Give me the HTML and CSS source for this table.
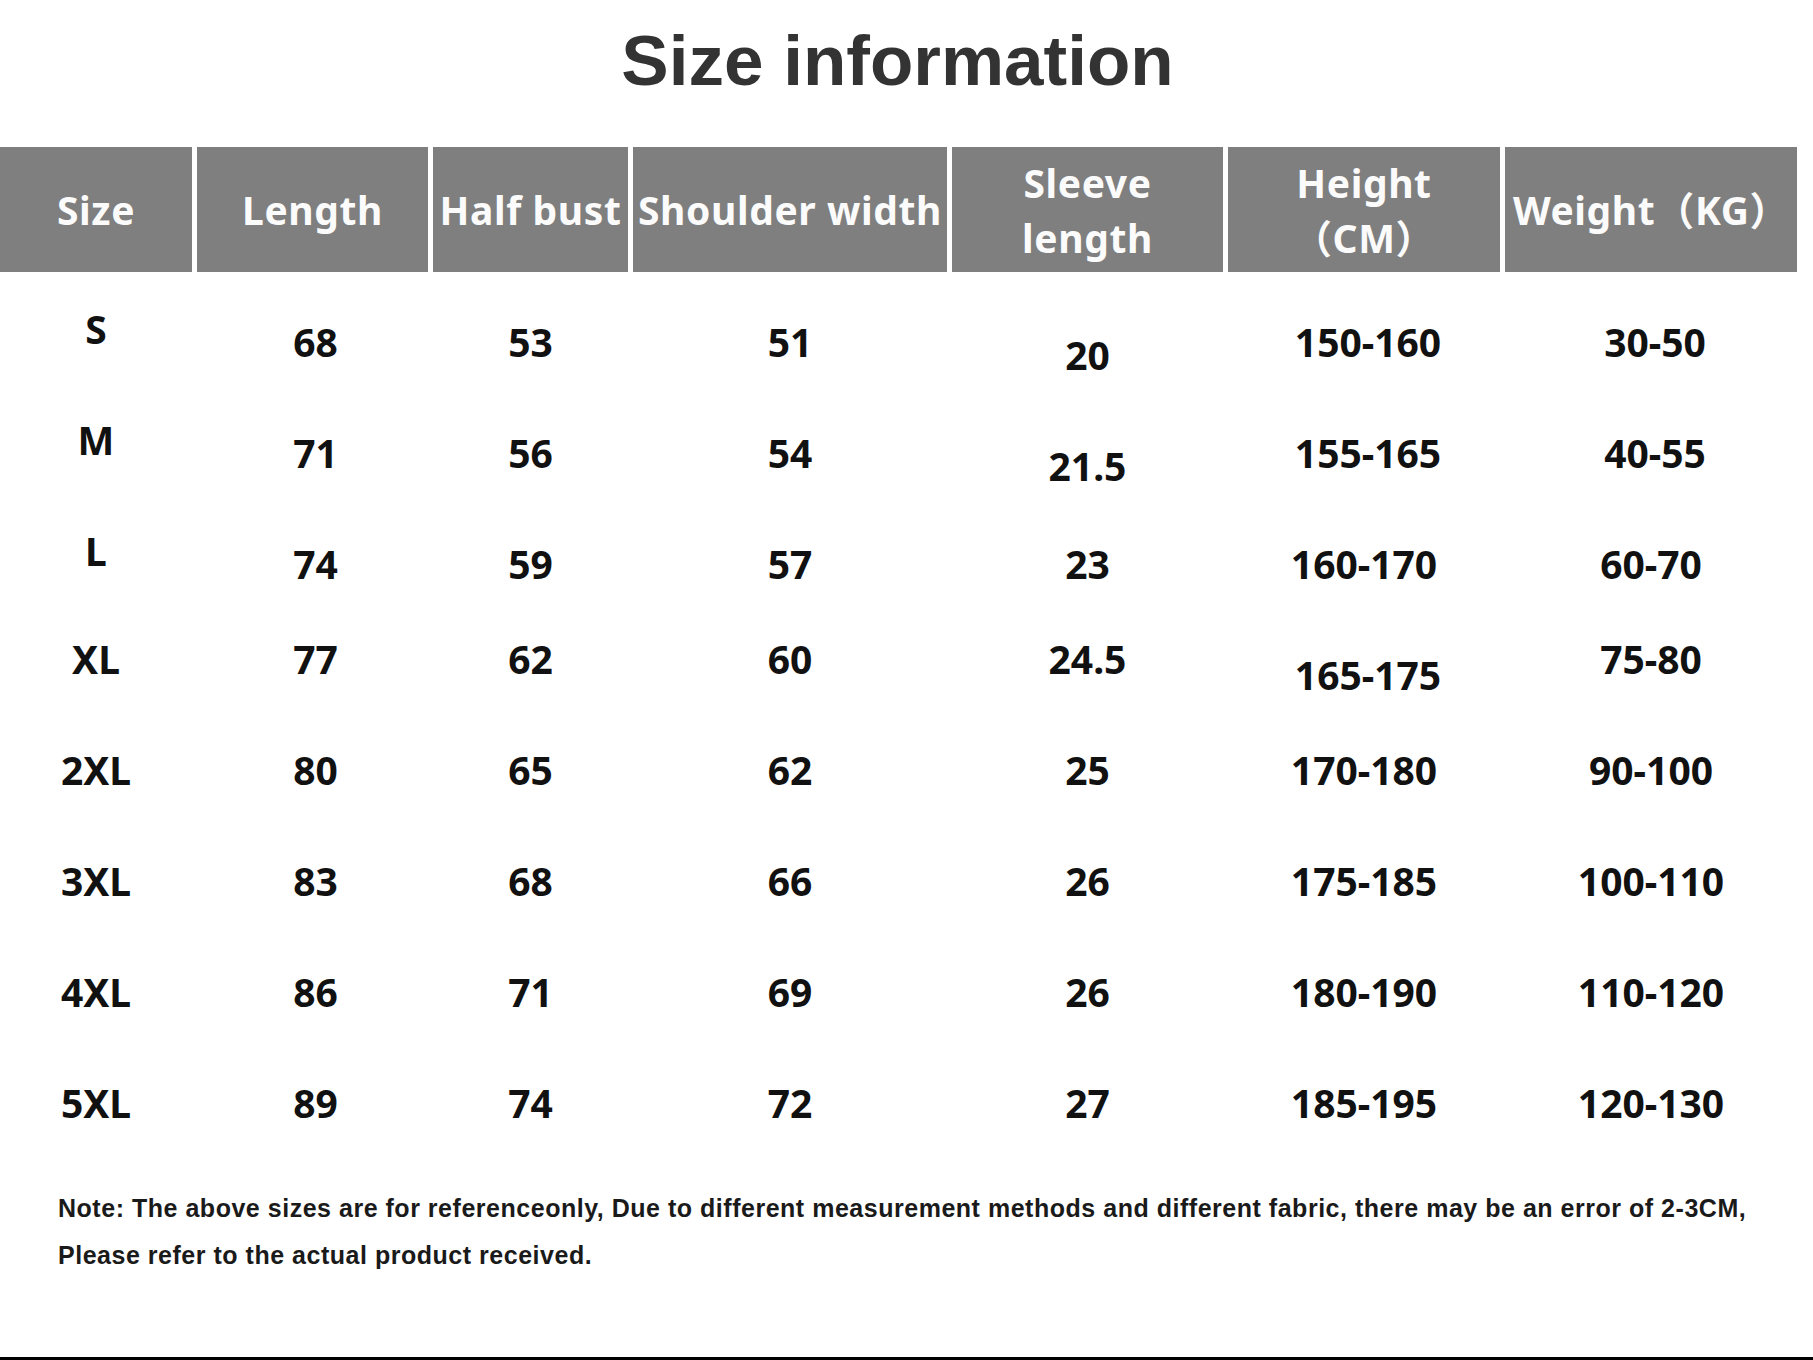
FILE: index.html
```html
<!DOCTYPE html>
<html lang="en">
<head>
<meta charset="utf-8">
<title>Size information</title>
<link rel="stylesheet" href="styles.css">
</head>
<body>
<div class="page">
  <h1 class="title">Size information</h1>

  <div class="chart">
    <div class="row head">
      <div class="hcell">Size</div>
      <div class="hcell">Length</div>
      <div class="hcell">Half bust</div>
      <div class="hcell">Shoulder width</div>
      <div class="hcell">Sleeve<br>length</div>
      <div class="hcell">Height<br>（CM）</div>
      <div class="hcell">Weight（KG）</div>
    </div>

    <div class="row data">
      <div class="cell up">S</div><div class="cell">68</div><div class="cell">53</div><div class="cell">51</div><div class="cell down">20</div><div class="cell right">150-160</div><div class="cell right">30-50</div>
    </div>
    <div class="row data">
      <div class="cell up">M</div><div class="cell">71</div><div class="cell">56</div><div class="cell">54</div><div class="cell down">21.5</div><div class="cell right">155-165</div><div class="cell right">40-55</div>
    </div>
    <div class="row data">
      <div class="cell up">L</div><div class="cell">74</div><div class="cell">59</div><div class="cell">57</div><div class="cell">23</div><div class="cell">160-170</div><div class="cell">60-70</div>
    </div>
    <div class="row data pull">
      <div class="cell">XL</div><div class="cell">77</div><div class="cell">62</div><div class="cell">60</div><div class="cell">24.5</div><div class="cell down2 right">165-175</div><div class="cell">75-80</div>
    </div>
    <div class="row data">
      <div class="cell">2XL</div><div class="cell">80</div><div class="cell">65</div><div class="cell">62</div><div class="cell">25</div><div class="cell">170-180</div><div class="cell">90-100</div>
    </div>
    <div class="row data">
      <div class="cell">3XL</div><div class="cell">83</div><div class="cell">68</div><div class="cell">66</div><div class="cell">26</div><div class="cell">175-185</div><div class="cell">100-110</div>
    </div>
    <div class="row data">
      <div class="cell">4XL</div><div class="cell">86</div><div class="cell">71</div><div class="cell">69</div><div class="cell">26</div><div class="cell">180-190</div><div class="cell">110-120</div>
    </div>
    <div class="row data">
      <div class="cell">5XL</div><div class="cell">89</div><div class="cell">74</div><div class="cell">72</div><div class="cell">27</div><div class="cell">185-195</div><div class="cell">120-130</div>
    </div>
  </div>

  <p class="note">Note: The above sizes are for referenceonly, Due to different measurement methods and different fabric, there may be an error of 2-3CM,<br>Please refer to the actual product received.</p>

  <div class="bottom-rule"></div>
</div>
</body>
</html>
```

FILE: styles.css
```css
* { box-sizing: border-box; }

html, body {
  margin: 0;
  padding: 0;
  background: #ffffff;
}

.page {
  min-height: 1360px;
  display: flex;
  flex-direction: column;
}

.title {
  margin: 21px 0 0;
  padding-right: 18px;
  height: 80px;
  line-height: 80px;
  text-align: center;
  font-family: "Liberation Sans", Arial, sans-serif;
  font-weight: 700;
  font-size: 71px;
  color: #333333;
}

.chart {
  margin-top: 46px;
  width: 1797px;
}

.row {
  display: grid;
  grid-template-columns: 192px 231px 195px 314px 271px 272px 292px;
  column-gap: 5px;
}

.head {
  height: 125px;
}

.hcell {
  background: #7f7f7f;
  color: #fbfbfb;
  display: flex;
  align-items: center;
  justify-content: center;
  text-align: center;
  font-family: "Noto Sans", "Noto Sans CJK SC", sans-serif;
  font-weight: 700;
  font-size: 39px;
  letter-spacing: 0.6px;
  line-height: 55px;
  white-space: nowrap;
}

.data {
  height: 111px;
}

.head + .data { margin-top: 14px; }

.data.pull { margin-top: -16px; }

.cell {
  display: flex;
  align-items: center;
  justify-content: center;
  font-family: "Noto Sans", sans-serif;
  font-weight: 700;
  font-size: 39px;
  line-height: 40px;
  color: #111111;
  white-space: nowrap;
}

.cell:nth-child(2) { padding-left: 6px; }

.cell.right { padding-left: 8px; }
.cell.up { padding-bottom: 26px; }
.cell.down { padding-top: 26px; }
.cell.down2 { padding-top: 32px; }

.note {
  margin: 27px 0 0;
  padding-left: 58px;
  font-family: "Liberation Sans", Arial, sans-serif;
  font-weight: 700;
  font-size: 25px;
  letter-spacing: 0.52px;
  line-height: 47px;
  color: #1a1a1a;
  white-space: nowrap;
}

.bottom-rule {
  margin-top: auto;
  height: 3px;
  background: #000000;
}
```
